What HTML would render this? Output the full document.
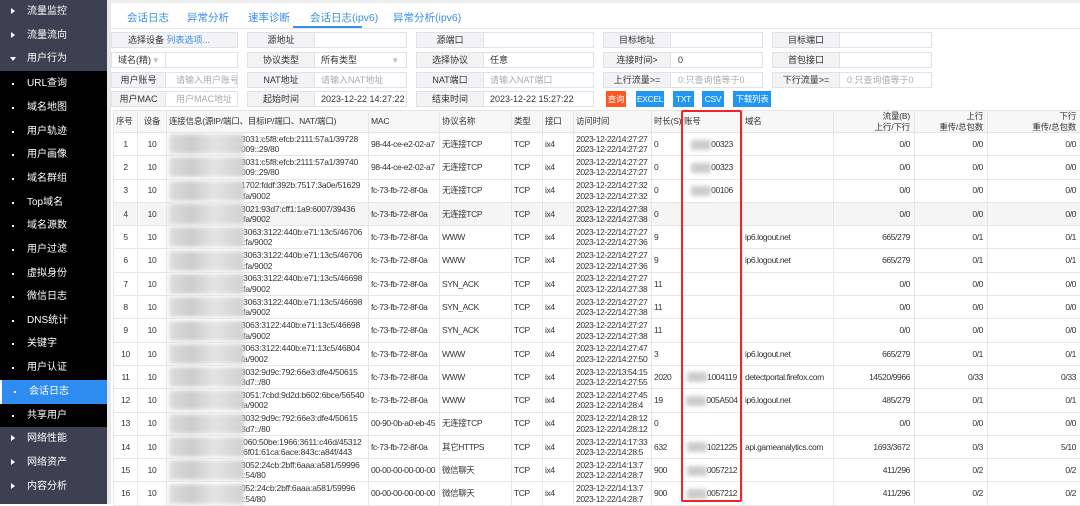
<!DOCTYPE html>
<html><head><meta charset="utf-8"><style>
*{margin:0;padding:0;box-sizing:border-box}
body{width:1080px;height:504px;overflow:hidden;background:#fff;font-family:"Liberation Sans","Noto Sans CJK SC",sans-serif;font-size:11px;color:#333;position:relative}
.sb{position:absolute;left:0;top:0;width:107px;height:504px;background:#000}
.sb div{position:absolute;left:0;width:107px;height:23.6px;line-height:23.6px;color:#fff;font-size:10px;padding-left:27px}
.sb .g{background:#3d4050}
.sb .a{background:#2d8cf0;border-left:2px solid #fff}
.sb .tri:before{content:"";position:absolute;left:11px;top:8px;border-left:4px solid #fff;border-top:3.5px solid transparent;border-bottom:3.5px solid transparent}
.sb .dn:before{content:"";position:absolute;left:10px;top:10px;border-top:4px solid #fff;border-left:3.5px solid transparent;border-right:3.5px solid transparent}
.sb .dot:before{content:"";position:absolute;left:12px;top:11px;width:2px;height:2px;background:#fff}
.gap{position:absolute;left:107px;top:0;width:4px;height:504px;background:#e8e8e8}
.topbar{position:absolute;left:111px;top:0;right:0;height:3px;background:#eee}
.tab{position:absolute;top:10px;color:#3a8ee6;font-size:10.5px;white-space:nowrap}
.ul{position:absolute;left:293px;top:26px;width:69px;height:2px;background:#3a8ee6}
.hr{position:absolute;left:111px;right:0;top:28px;height:1px;background:#e6e6e6}
.f{position:absolute;height:16px;border:1px solid #dde3ec;background:#fff;font-size:9px;line-height:14px;white-space:nowrap;overflow:hidden}
.f .l{position:absolute;left:0;top:0;bottom:0;background:#f3f3f3;border-right:1px solid #dde3ec;text-align:center;color:#333}
.f .v{position:absolute;top:0;color:#333}
.f .p{color:#aaa}
.btn{position:absolute;top:91px;height:16px;line-height:16px;color:#fff;font-size:8.5px;text-align:center;background:#2196f3;white-space:nowrap;letter-spacing:-0.3px}
table{position:absolute;left:113px;top:110px;border-collapse:collapse;table-layout:fixed;width:967px}
td,th{border:1px solid #e6e6e6;font-size:8.5px;letter-spacing:-0.4px;line-height:10.5px;font-weight:normal;text-align:left;padding:0 2px;white-space:nowrap;overflow:hidden;vertical-align:middle}
th{background:#f7f7f7;height:21px;color:#333;letter-spacing:-0.2px}
tr.r td{height:23.3px}
tr.h td{background:#f5f5f5}
.c{text-align:center!important}
.rt{text-align:right!important;padding-right:4px}
.bl{display:inline-block;width:75px;height:20px;vertical-align:middle;background:linear-gradient(90deg,#ddd,#ccc 30%,#e4e4e4 60%,#d0d0d0);filter:blur(2px);margin-right:-3px}
.conn{display:flex;align-items:center;letter-spacing:-0.2px}
.ab{display:inline-block;width:20px;height:10px;background:#ccc;filter:blur(2px);vertical-align:middle}
.red{position:absolute;left:681px;top:110px;width:61px;height:392px;border:2px solid #f0252a;border-radius:2px}
</style></head><body>
<div class="sb">
<div class="g tri" style="top:0">流量监控</div>
<div class="g tri" style="top:23.6px">流量流向</div>
<div class="g dn" style="top:47.2px">用户行为</div>
<div class="dot" style="top:72px">URL查询</div>
<div class="dot" style="top:96px">域名地图</div>
<div class="dot" style="top:119.5px">用户轨迹</div>
<div class="dot" style="top:143px">用户画像</div>
<div class="dot" style="top:167px">域名群组</div>
<div class="dot" style="top:190.5px">Top域名</div>
<div class="dot" style="top:214px">域名源数</div>
<div class="dot" style="top:238px">用户过滤</div>
<div class="dot" style="top:261.5px">虚拟身份</div>
<div class="dot" style="top:285px">微信日志</div>
<div class="dot" style="top:308.5px">DNS统计</div>
<div class="dot" style="top:332px">关键字</div>
<div class="dot" style="top:356px">用户认证</div>
<div class="a dot" style="top:380px">会话日志</div>
<div class="dot" style="top:403.5px">共享用户</div>
<div class="g tri" style="top:427px;height:77px"></div>
<div class="tri" style="top:427px">网络性能</div>
<div class="tri" style="top:451px">网络资产</div>
<div class="tri" style="top:474.5px">内容分析</div>
</div>
<div class="gap"></div><div class="topbar"></div>
<div class="tab" style="left:127px">会话日志</div>
<div class="tab" style="left:187px">异常分析</div>
<div class="tab" style="left:248px">速率诊断</div>
<div class="tab" style="left:310px">会话日志(ipv6)</div>
<div class="tab" style="left:393px">异常分析(ipv6)</div>
<div class="ul"></div><div class="hr"></div>

<div class="f" style="left:111px;top:32px;width:127px;background:#f3f3f3"><span class="v" style="left:16px">选择设备 <span style="color:#3a8ee6">列表选项...</span></span></div>
<div class="f" style="left:111px;top:52px;width:127px"><div class="l" style="width:54px;background:#fff;text-align:left;padding-left:6px">域名(精) <span style="color:#bbb">▾</span></div></div>
<div class="f" style="left:111px;top:72px;width:127px"><div class="l" style="width:54px">用户账号</div><span class="v p" style="left:64px">请输入用户账号</span></div>
<div class="f" style="left:111px;top:91px;width:127px"><div class="l" style="width:54px">用户MAC</div><span class="v p" style="left:64px">用户MAC地址</span></div>

<div class="f" style="left:247px;top:32px;width:160px"><div class="l" style="width:67px">源地址</div></div>
<div class="f" style="left:247px;top:52px;width:160px"><div class="l" style="width:67px">协议类型</div><span class="v" style="left:73px">所有类型</span><span class="v" style="left:145px;color:#bbb">▾</span></div>
<div class="f" style="left:247px;top:72px;width:160px"><div class="l" style="width:67px">NAT地址</div><span class="v p" style="left:73px">请输入NAT地址</span></div>
<div class="f" style="left:247px;top:91px;width:160px"><div class="l" style="width:67px">起始时间</div><span class="v" style="left:73px">2023-12-22 14:27:22</span></div>

<div class="f" style="left:416px;top:32px;width:178px"><div class="l" style="width:67px">源端口</div></div>
<div class="f" style="left:416px;top:52px;width:178px"><div class="l" style="width:67px">选择协议</div><span class="v" style="left:73px">任意</span></div>
<div class="f" style="left:416px;top:72px;width:178px"><div class="l" style="width:67px">NAT端口</div><span class="v p" style="left:73px">请输入NAT端口</span></div>
<div class="f" style="left:416px;top:91px;width:178px"><div class="l" style="width:67px">结束时间</div><span class="v" style="left:73px">2023-12-22 15:27:22</span></div>

<div class="f" style="left:603px;top:32px;width:160px"><div class="l" style="width:67px">目标地址</div></div>
<div class="f" style="left:603px;top:52px;width:160px"><div class="l" style="width:67px">连接时间&gt;</div><span class="v" style="left:74px">0</span></div>
<div class="f" style="left:603px;top:72px;width:160px"><div class="l" style="width:67px">上行流量&gt;=</div><span class="v p" style="left:74px">0:只查询值等于0</span></div>
<div class="f" style="left:772px;top:32px;width:160px"><div class="l" style="width:67px">目标端口</div></div>
<div class="f" style="left:772px;top:52px;width:160px"><div class="l" style="width:67px">首包接口</div></div>
<div class="f" style="left:772px;top:72px;width:160px"><div class="l" style="width:67px">下行流量&gt;=</div><span class="v p" style="left:74px">0:只查询值等于0</span></div>

<div class="btn" style="left:606px;width:20px;background:#ff5722">查询</div>
<div class="btn" style="left:636px;width:28px">EXCEL</div>
<div class="btn" style="left:673px;width:21px">TXT</div>
<div class="btn" style="left:702px;width:22px">CSV</div>
<div class="btn" style="left:733px;width:38px">下载列表</div>

<table>
<colgroup><col style="width:24px"><col style="width:29px"><col style="width:202px"><col style="width:71px"><col style="width:72px"><col style="width:31px"><col style="width:31px"><col style="width:78px"><col style="width:30px"><col style="width:61px"><col style="width:91px"><col style="width:81px"><col style="width:73px"><col style="width:93px"></colgroup>
<tr><th>序号</th><th class="c">设备</th><th>连接信息(源IP/端口、目标IP/端口、NAT/端口)</th><th>MAC</th><th>协议名称</th><th>类型</th><th>接口</th><th>访问时间</th><th>时长(S)</th><th>账号</th><th>域名</th><th class="rt">流量(B)<br>上行/下行</th><th class="rt">上行<br>重传/总包数</th><th class="rt">下行<br>重传/总包数</th></tr>
<tr class="r"><td class="c">1</td><td class="c">10</td><td><div class="conn"><span class="bl"></span><span>3031:c5f8:efcb:2111:57a1/39728<br>009::29/80</span></div></td><td>98-44-ce-e2-02-a7</td><td>无连接TCP</td><td>TCP</td><td>ix4</td><td>2023-12-22/14:27:27<br>2023-12-22/14:27:27</td><td>0</td><td class="c"><span class="ab"></span>00323</td><td></td><td class="rt">0/0</td><td class="rt">0/0</td><td class="rt">0/0</td></tr>
<tr class="r"><td class="c">2</td><td class="c">10</td><td><div class="conn"><span class="bl"></span><span>3031:c5f8:efcb:2111:57a1/39740<br>009::29/80</span></div></td><td>98-44-ce-e2-02-a7</td><td>无连接TCP</td><td>TCP</td><td>ix4</td><td>2023-12-22/14:27:27<br>2023-12-22/14:27:27</td><td>0</td><td class="c"><span class="ab"></span>00323</td><td></td><td class="rt">0/0</td><td class="rt">0/0</td><td class="rt">0/0</td></tr>
<tr class="r"><td class="c">3</td><td class="c">10</td><td><div class="conn"><span class="bl"></span><span>1702:fddf:392b:7517:3a0e/51629<br>:fa/9002</span></div></td><td>fc-73-fb-72-8f-0a</td><td>无连接TCP</td><td>TCP</td><td>ix4</td><td>2023-12-22/14:27:32<br>2023-12-22/14:27:32</td><td>0</td><td class="c"><span class="ab"></span>00106</td><td></td><td class="rt">0/0</td><td class="rt">0/0</td><td class="rt">0/0</td></tr>
<tr class="r h"><td class="c">4</td><td class="c">10</td><td><div class="conn"><span class="bl"></span><span>3021:93d7:cff1:1a9:6007/39436<br>:fa/9002</span></div></td><td>fc-73-fb-72-8f-0a</td><td>无连接TCP</td><td>TCP</td><td>ix4</td><td>2023-12-22/14:27:38<br>2023-12-22/14:27:38</td><td>0</td><td></td><td></td><td class="rt">0/0</td><td class="rt">0/0</td><td class="rt">0/0</td></tr>
<tr class="r"><td class="c">5</td><td class="c">10</td><td><div class="conn"><span class="bl"></span><span>:3063:3122:440b:e71:13c5/46706<br>::fa/9002</span></div></td><td>fc-73-fb-72-8f-0a</td><td>WWW</td><td>TCP</td><td>ix4</td><td>2023-12-22/14:27:27<br>2023-12-22/14:27:36</td><td>9</td><td></td><td>ip6.logout.net</td><td class="rt">665/279</td><td class="rt">0/1</td><td class="rt">0/1</td></tr>
<tr class="r"><td class="c">6</td><td class="c">10</td><td><div class="conn"><span class="bl"></span><span>:3063:3122:440b:e71:13c5/46706<br>::fa/9002</span></div></td><td>fc-73-fb-72-8f-0a</td><td>WWW</td><td>TCP</td><td>ix4</td><td>2023-12-22/14:27:27<br>2023-12-22/14:27:36</td><td>9</td><td></td><td>ip6.logout.net</td><td class="rt">665/279</td><td class="rt">0/1</td><td class="rt">0/1</td></tr>
<tr class="r"><td class="c">7</td><td class="c">10</td><td><div class="conn"><span class="bl"></span><span>:3063:3122:440b:e71:13c5/46698<br>:fa/9002</span></div></td><td>fc-73-fb-72-8f-0a</td><td>SYN_ACK</td><td>TCP</td><td>ix4</td><td>2023-12-22/14:27:27<br>2023-12-22/14:27:38</td><td>11</td><td></td><td></td><td class="rt">0/0</td><td class="rt">0/0</td><td class="rt">0/0</td></tr>
<tr class="r"><td class="c">8</td><td class="c">10</td><td><div class="conn"><span class="bl"></span><span>:3063:3122:440b:e71:13c5/46698<br>:fa/9002</span></div></td><td>fc-73-fb-72-8f-0a</td><td>SYN_ACK</td><td>TCP</td><td>ix4</td><td>2023-12-22/14:27:27<br>2023-12-22/14:27:38</td><td>11</td><td></td><td></td><td class="rt">0/0</td><td class="rt">0/0</td><td class="rt">0/0</td></tr>
<tr class="r"><td class="c">9</td><td class="c">10</td><td><div class="conn"><span class="bl"></span><span>3063:3122:440b:e71:13c5/46698<br>:fa/9002</span></div></td><td>fc-73-fb-72-8f-0a</td><td>SYN_ACK</td><td>TCP</td><td>ix4</td><td>2023-12-22/14:27:27<br>2023-12-22/14:27:38</td><td>11</td><td></td><td></td><td class="rt">0/0</td><td class="rt">0/0</td><td class="rt">0/0</td></tr>
<tr class="r"><td class="c">10</td><td class="c">10</td><td><div class="conn"><span class="bl"></span><span>3063:3122:440b:e71:13c5/46804<br>fa/9002</span></div></td><td>fc-73-fb-72-8f-0a</td><td>WWW</td><td>TCP</td><td>ix4</td><td>2023-12-22/14:27:47<br>2023-12-22/14:27:50</td><td>3</td><td></td><td>ip6.logout.net</td><td class="rt">665/279</td><td class="rt">0/1</td><td class="rt">0/1</td></tr>
<tr class="r"><td class="c">11</td><td class="c">10</td><td><div class="conn"><span class="bl"></span><span>3032:9d9c:792:66e3:dfe4/50615<br>3d7::/80</span></div></td><td>fc-73-fb-72-8f-0a</td><td>WWW</td><td>TCP</td><td>ix4</td><td>2023-12-22/13:54:15<br>2023-12-22/14:27:55</td><td>2020</td><td class="c"><span class="ab"></span>1004119</td><td>detectportal.firefox.com</td><td class="rt">14520/9966</td><td class="rt">0/33</td><td class="rt">0/33</td></tr>
<tr class="r"><td class="c">12</td><td class="c">10</td><td><div class="conn"><span class="bl"></span><span>3051:7cbd:9d2d:b602:6bce/56540<br>fa/9002</span></div></td><td>fc-73-fb-72-8f-0a</td><td>WWW</td><td>TCP</td><td>ix4</td><td>2023-12-22/14:27:45<br>2023-12-22/14:28:4</td><td>19</td><td class="c"><span class="ab"></span>005A504</td><td>ip6.logout.net</td><td class="rt">485/279</td><td class="rt">0/1</td><td class="rt">0/1</td></tr>
<tr class="r"><td class="c">13</td><td class="c">10</td><td><div class="conn"><span class="bl"></span><span>3032:9d9c:792:66e3:dfe4/50615<br>3d7::/80</span></div></td><td>00-90-0b-a0-eb-45</td><td>无连接TCP</td><td>TCP</td><td>ix4</td><td>2023-12-22/14:28:12<br>2023-12-22/14:28:12</td><td>0</td><td></td><td></td><td class="rt">0/0</td><td class="rt">0/0</td><td class="rt">0/0</td></tr>
<tr class="r"><td class="c">14</td><td class="c">10</td><td><div class="conn"><span class="bl"></span><span>.060:50be:1966:3611:c46d/45312<br>:6f01:61ca:6ace:843c:a84f/443</span></div></td><td>fc-73-fb-72-8f-0a</td><td>其它HTTPS</td><td>TCP</td><td>ix4</td><td>2023-12-22/14:17:33<br>2023-12-22/14:28:5</td><td>632</td><td class="c"><span class="ab"></span>1021225</td><td>api.gameanalytics.com</td><td class="rt">1693/3672</td><td class="rt">0/3</td><td class="rt">5/10</td></tr>
<tr class="r"><td class="c">15</td><td class="c">10</td><td><div class="conn"><span class="bl"></span><span>3052:24cb:2bff:6aaa:a581/59996<br>::54/80</span></div></td><td>00-00-00-00-00-00</td><td>微信聊天</td><td>TCP</td><td>ix4</td><td>2023-12-22/14:13:7<br>2023-12-22/14:28:7</td><td>900</td><td class="c"><span class="ab"></span>0057212</td><td></td><td class="rt">411/296</td><td class="rt">0/2</td><td class="rt">0/2</td></tr>
<tr class="r"><td class="c">16</td><td class="c">10</td><td><div class="conn"><span class="bl"></span><span>052:24cb:2bff:6aaa:a581/59996<br>::54/80</span></div></td><td>00-00-00-00-00-00</td><td>微信聊天</td><td>TCP</td><td>ix4</td><td>2023-12-22/14:13:7<br>2023-12-22/14:28:7</td><td>900</td><td class="c"><span class="ab"></span>0057212</td><td></td><td class="rt">411/296</td><td class="rt">0/2</td><td class="rt">0/2</td></tr>
</table>
<div class="red"></div>
</body></html>
